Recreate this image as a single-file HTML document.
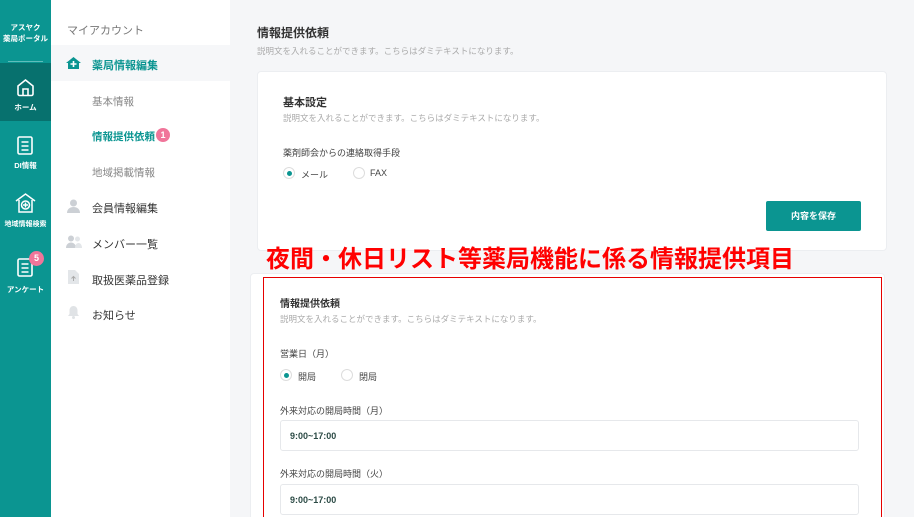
<!DOCTYPE html>
<html><head><meta charset="utf-8"><style>
*{margin:0;padding:0;box-sizing:border-box}
html,body{width:914px;height:517px;overflow:hidden}
body{position:relative;font-family:"Liberation Sans","Noto Sans CJK JP",sans-serif;background:#f5f6f8;color:#333}
.a{position:absolute}
.rail{left:0;top:0;width:51px;height:517px;background:#0b9591}
.rt{left:0;color:#fff;font-size:7.5px;font-weight:bold;text-align:center;width:51px;white-space:nowrap}
.side{left:51px;top:0;width:179px;height:517px;background:#fff}
.mi{font-size:11px;color:#333;white-space:nowrap}
.sub{font-size:10.5px;color:#888;white-space:nowrap}
.card{background:#fff;border-radius:4px;border:1px solid #eceef1}
.h{font-size:11px;font-weight:bold;color:#333;white-space:nowrap}
.d{font-size:8.5px;color:#aaa;white-space:nowrap}
.l{font-size:9px;color:#444;white-space:nowrap}
.r{width:12px;height:12px;border-radius:50%;border:1px solid #ddd;background:#fff}
.r.on::after{content:"";position:absolute;left:3px;top:3px;width:5px;height:5px;border-radius:50%;background:#0b9591}
.in{background:#fff;border:1px solid #e6e8eb;border-radius:3px;height:31px;font-size:9px;font-weight:bold;color:#2b4a45;padding:10px 9px}
.rb{position:absolute;background:#e60000;z-index:5}
</style></head><body>
<div class="a rail"></div>
<div class="a rt" style="top:22px;line-height:11px">アスヤク<br>薬局ポータル</div>
<div class="a" style="left:8px;top:61px;width:35px;height:1px;background:#5fbdba"></div>
<div class="a" style="left:0;top:63px;width:51px;height:58px;background:#07716e"></div>
<svg class="a" style="left:16px;top:78px" width="19" height="19" viewBox="0 0 19 19" fill="none" stroke="#fff" stroke-width="1.6"><path d="M2 8L9.5 2 17 8V16a1.5 1.5 0 0 1-1.5 1.5h-12A1.5 1.5 0 0 1 2 16z"/><path d="M7 17V11h5v6"/></svg>
<div class="a rt" style="top:102px">ホーム</div>
<svg class="a" style="left:17px;top:136px" width="16" height="19" viewBox="0 0 16 19" fill="none" stroke="#fff" stroke-width="1.6"><rect x="1" y="1" width="14" height="17" rx="1.5"/><path d="M4.5 6h7M4.5 10h7M4.5 14h7"/></svg>
<div class="a rt" style="top:160px">DI情報</div>
<svg class="a" style="left:15px;top:193px" width="21" height="20" viewBox="0 0 21 20" fill="none" stroke="#fff" stroke-width="1.5"><path d="M1 8L10.5 1 20 8"/><path d="M4 7v12h13V7"/><circle cx="10.5" cy="12" r="4"/><path d="M10.5 9.5v5M8 12h5"/></svg>
<div class="a rt" style="top:219px;font-size:7px">地域情報検索</div>
<svg class="a" style="left:17px;top:258px" width="16" height="19" viewBox="0 0 16 19" fill="none" stroke="#fff" stroke-width="1.6"><rect x="1" y="1" width="14" height="17" rx="1.5"/><path d="M4.5 6h7M4.5 10h7M4.5 14h7"/></svg>
<div class="a" style="left:29px;top:251px;width:15px;height:15px;border-radius:50%;background:#f0759a;color:#fff;font-size:9px;font-weight:bold;text-align:center;line-height:15px">5</div>
<div class="a rt" style="top:284px">アンケート</div>

<div class="a side"></div>
<div class="a mi" style="left:67px;top:22px;color:#777">マイアカウント</div>
<div class="a" style="left:51px;top:45px;width:179px;height:36px;background:#f6f7f9"></div>
<svg class="a" style="left:66px;top:57px" width="15" height="12" viewBox="0 0 15 12"><path d="M7.5 0L15 6h-2v6H2V6H0z" fill="#0b9591"/><path d="M7.5 4v6M4.5 7h6" stroke="#fff" stroke-width="1.6"/></svg>
<div class="a mi" style="left:92px;top:57px;color:#0b9591;font-weight:bold">薬局情報編集</div>
<div class="a sub" style="left:92px;top:94px">基本情報</div>
<div class="a sub" style="left:92px;top:129px;color:#0b9591;font-weight:bold">情報提供依頼</div>
<div class="a" style="left:156px;top:128px;width:14px;height:14px;border-radius:50%;background:#f0759a;color:#fff;font-size:9px;font-weight:bold;text-align:center;line-height:14px">1</div>
<div class="a sub" style="left:92px;top:165px">地域掲載情報</div>
<svg class="a" style="left:67px;top:199px" width="13" height="14" viewBox="0 0 13 14" fill="#ccd0d5"><circle cx="6.5" cy="4" r="3.5"/><path d="M0 14c0-4 3-6 6.5-6s6.5 2 6.5 6z"/></svg>
<div class="a mi" style="left:92px;top:200px">会員情報編集</div>
<svg class="a" style="left:66px;top:235px" width="16" height="13" viewBox="0 0 16 13" fill="#ccd0d5"><circle cx="5" cy="3.5" r="3"/><path d="M0 13c0-3.5 2.3-5.5 5-5.5s5 2 5 5.5z"/><circle cx="11.5" cy="4" r="2.5" fill="#e3e6e9"/><path d="M9 13c0-3 1.5-5 3.5-5S16 10 16 13z" fill="#e3e6e9"/></svg>
<div class="a mi" style="left:92px;top:236px">メンバー一覧</div>
<svg class="a" style="left:68px;top:270px" width="11" height="14" viewBox="0 0 11 14"><path d="M0 0h7l4 4v10H0z" fill="#e3e6e9"/><path d="M5.5 11V6.5M3.5 8.5l2-2 2 2" stroke="#aaa" stroke-width="1" fill="none"/></svg>
<div class="a mi" style="left:92px;top:272px">取扱医薬品登録</div>
<svg class="a" style="left:68px;top:306px" width="11" height="13" viewBox="0 0 11 13" fill="#e0e3e6"><path d="M5.5 0C3 0 1.5 2 1.5 4.5V8L0 10h11L9.5 8V4.5C9.5 2 8 0 5.5 0z"/><circle cx="5.5" cy="11.5" r="1.5"/></svg>
<div class="a mi" style="left:92px;top:307px">お知らせ</div>

<div class="a" style="left:257px;top:24px;font-size:12px;font-weight:bold;color:#333">情報提供依頼</div>
<div class="a d" style="left:257px;top:45px">説明文を入れることができます。こちらはダミテキストになります。</div>
<div class="a card" style="left:257px;top:71px;width:630px;height:180px"></div>
<div class="a h" style="left:283px;top:94px">基本設定</div>
<div class="a d" style="left:283px;top:112px">説明文を入れることができます。こちらはダミテキストになります。</div>
<div class="a l" style="left:283px;top:146px">薬剤師会からの連絡取得手段</div>
<div class="a r on" style="left:283px;top:167px"></div>
<div class="a l" style="left:301px;top:168px">メール</div>
<div class="a r" style="left:353px;top:167px"></div>
<div class="a l" style="left:370px;top:168px">FAX</div>
<div class="a" style="left:766px;top:201px;width:95px;height:30px;background:#0b9591;border-radius:2px;color:#fff;font-size:9px;font-weight:bold;text-align:center;line-height:30px">内容を保存</div>
<div class="a card" style="left:250px;top:273px;width:635px;height:260px"></div>
<div class="rb" style="left:263px;top:277px;width:619px;height:1px"></div>
<div class="rb" style="left:263px;top:277px;width:1px;height:240px"></div>
<div class="rb" style="left:881px;top:277px;width:1px;height:240px"></div>
<div class="a" style="left:266px;top:239px;font-size:24px;font-weight:bold;color:#f00;white-space:nowrap">夜間・休日リスト等薬局機能に係る情報提供項目</div>
<div class="a h" style="left:280px;top:295px;font-size:10px">情報提供依頼</div>
<div class="a d" style="left:280px;top:313px">説明文を入れることができます。こちらはダミテキストになります。</div>
<div class="a l" style="left:280px;top:347px">営業日（月）</div>
<div class="a r on" style="left:280px;top:369px"></div>
<div class="a l" style="left:298px;top:370px">開局</div>
<div class="a r" style="left:341px;top:369px"></div>
<div class="a l" style="left:359px;top:370px">閉局</div>
<div class="a l" style="left:280px;top:404px">外来対応の開局時間（月）</div>
<div class="a in" style="left:280px;top:420px;width:579px">9:00~17:00</div>
<div class="a l" style="left:280px;top:467px">外来対応の開局時間（火）</div>
<div class="a in" style="left:280px;top:484px;width:579px">9:00~17:00</div>
</body></html>
